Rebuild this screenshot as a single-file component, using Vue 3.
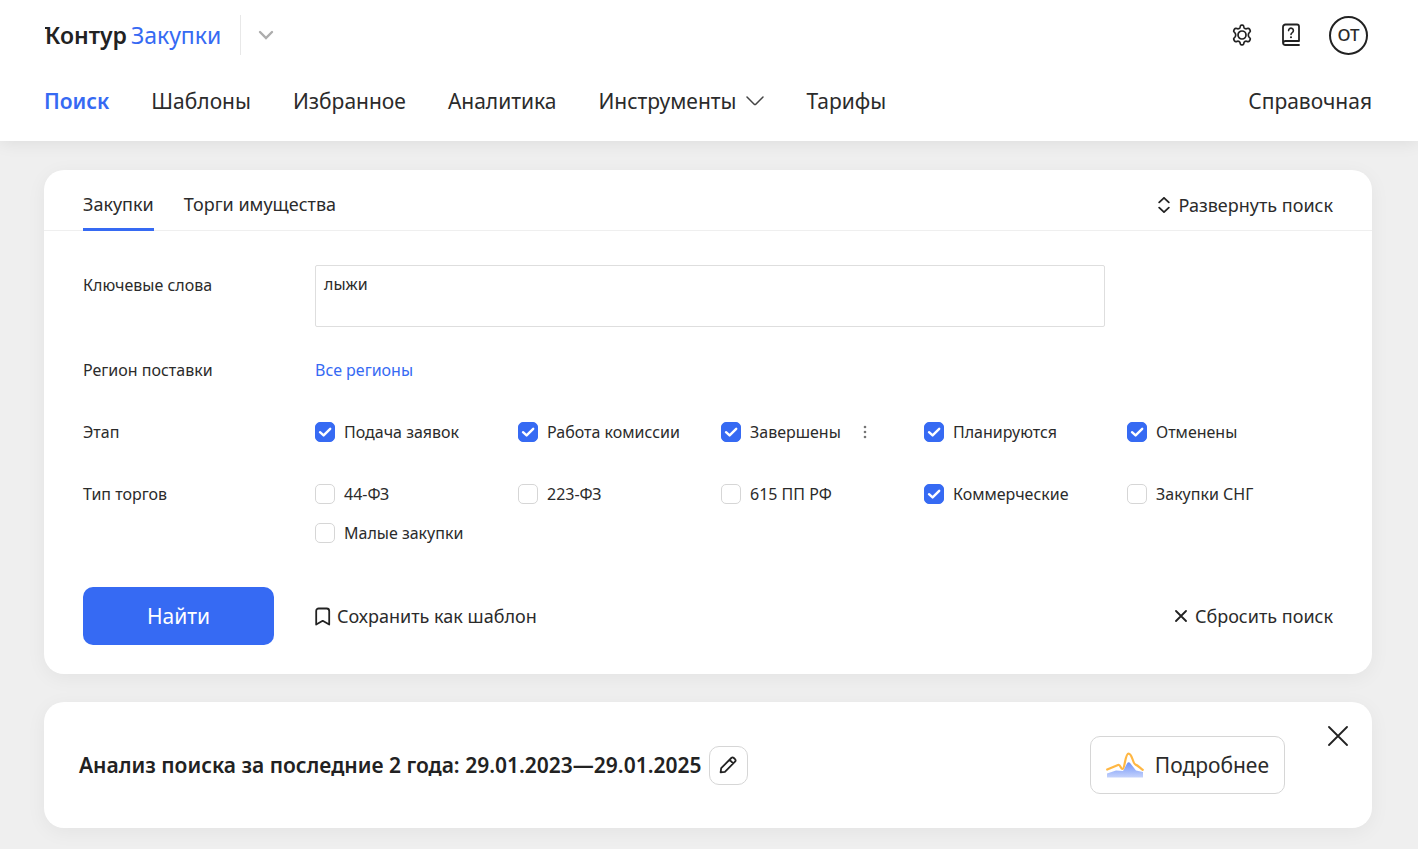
<script setup>
import { ref, reactive } from 'vue'

const keywords = ref('лыжи')
const tabs = ['Закупки', 'Торги имущества']
const activeTab = ref(0)

const groups = reactive([
  {
    id: 'stage',
    title: 'Этап',
    items: [
      { label: 'Подача заявок', on: true },
      { label: 'Работа комиссии', on: true },
      { label: 'Завершены', on: true, menu: true },
      { label: 'Планируются', on: true },
      { label: 'Отменены', on: true },
    ],
  },
  {
    id: 'type',
    title: 'Тип торгов',
    items: [
      { label: '44-ФЗ', on: false },
      { label: '223-ФЗ', on: false },
      { label: '615 ПП РФ', on: false },
      { label: 'Коммерческие', on: true },
      { label: 'Закупки СНГ', on: false },
      { label: 'Малые закупки', on: false },
    ],
  },
])

function reset() {
  keywords.value = ''
  groups.forEach((g) => g.items.forEach((i) => (i.on = false)))
}
</script>

<template>
  <div class="page">
    <header class="header">
      <div class="brand-row">
        <a href="#" class="logo"><span class="logo-main">Контур</span><span class="logo-product">Закупки</span></a>
        <button type="button" class="switcher" aria-label="Сервисы">
          <svg width="16" height="10" viewBox="0 0 16 10"><path d="M2 2l6 6 6-6" fill="none" stroke="#adadad" stroke-width="2.4" stroke-linecap="round" /></svg>
        </button>
        <div class="tools">
          <button type="button" class="icon-btn" aria-label="Настройки">
            <svg width="22" height="22" viewBox="0 0 22 22" fill="none" stroke="#222" stroke-width="1.7" stroke-linejoin="round">
              <path d="M9.300 2.200Q9.500 1.200 10.500 1.200h1Q12.500 1.200 12.700 2.200L13 3.400Q13.200 4.100 13.900 4.500T15.300 4.800L16.600 4.400Q17.800 4 18.400 5l.7 1.200Q19.700 7.200 18.900 8L18.200 8.700Q17.300 9.700 17.300 11T18.200 13.300L18.900 14Q19.700 14.800 19.100 15.800L18.400 17Q17.800 18 16.600 17.600L15.300 17.200Q14.600 17.100 13.900 17.500T13 18.600L12.700 19.800Q12.500 20.800 11.500 20.800h-1Q9.500 20.800 9.300 19.800L9 18.600Q8.800 17.900 8.100 17.500T6.700 17.200L5.400 17.600Q4.200 18 3.600 17L2.900 15.800Q2.300 14.800 3.100 14L3.800 13.300Q4.700 12.300 4.700 11T3.800 8.700L3.100 8Q2.300 7.200 2.900 6.200L3.600 5Q4.200 4 5.400 4.400L6.700 4.800Q7.400 4.900 8.100 4.500T9 3.400z" />
              <circle cx="11" cy="11" r="4" />
            </svg>
          </button>
          <button type="button" class="icon-btn" aria-label="Помощь">
            <svg width="20" height="24" viewBox="0 0 20 24" fill="none" stroke="#222" stroke-width="1.8" stroke-linecap="round" stroke-linejoin="round">
              <path d="M18 22H4.500A2.500 2.500 0 0 1 2 19.500V4a2.500 2.500 0 0 1 2.500-2.500H16A2 2 0 0 1 18 3.500V18H4.500a2.200 2.200 0 0 0-2.200 1.500" />
              <path d="M7.600 7.600a2.400 2.400 0 1 1 3.700 2c-.9.600-1.300 1-1.300 1.900" stroke-width="1.600" />
              <circle cx="10" cy="14.300" r=".5" stroke-width="1.100" />
            </svg>
          </button>
          <button type="button" class="avatar" aria-label="Профиль ОТ">ОТ</button>
        </div>
      </div>
      <nav class="nav">
        <a href="#" class="active">Поиск</a>
        <a href="#">Шаблоны</a>
        <a href="#">Избранное</a>
        <a href="#">Аналитика</a>
        <a href="#" class="with-arrow">Инструменты
          <svg width="18" height="10" viewBox="0 0 18 10"><path d="M1 1l7.200 7.200a1.100 1.100 0 0 0 1.600 0L17 1" fill="none" stroke="#444" stroke-width="1.500" stroke-linecap="round" /></svg>
        </a>
        <a href="#">Тарифы</a>
        <a href="#" class="nav-end">Справочная</a>
      </nav>
    </header>

    <main class="content">
      <form class="card search" @submit.prevent>
        <div class="tabs">
          <button v-for="(t, i) in tabs" :key="t" type="button" class="tab" :class="{ current: i === activeTab }" @click="activeTab = i">{{ t }}</button>
          <button type="button" class="text-btn expand">
            <svg width="12" height="16" viewBox="0 0 12 16" fill="none" stroke="#222" stroke-width="1.800" stroke-linecap="round"><path d="M1.200 5.300L6 .9l4.800 4.400M1.200 10.700L6 15.100l4.800-4.400" /></svg>
            Развернуть поиск
          </button>
        </div>

        <div class="fields">
          <label class="caption keywords-caption" for="keywords">Ключевые слова</label>
          <textarea id="keywords" v-model="keywords" class="keywords"></textarea>

          <span class="caption">Регион поставки</span>
          <a href="#" class="link">Все регионы</a>

          <template v-for="g in groups" :key="g.id">
            <span :id="g.id" class="caption">{{ g.title }}</span>
            <div class="options" role="group" :aria-labelledby="g.id">
              <div v-for="item in g.items" :key="item.label" class="option">
                <label class="check">
                  <span class="box">
                    <input v-model="item.on" type="checkbox" />
                    <svg v-if="item.on" width="20" height="20" viewBox="0 0 20 20"><path d="M5 10.200l3.600 3.200 6.600-6.600" fill="none" stroke="#fff" stroke-width="2.400" stroke-linecap="round" stroke-linejoin="round" /></svg>
                  </span>
                  {{ item.label }}
                </label>
                <button v-if="item.menu" type="button" class="more" aria-label="Ещё">
                  <svg width="4" height="14" viewBox="0 0 4 14" fill="#757575"><circle cx="2" cy="2" r="1.300" /><circle cx="2" cy="7" r="1.300" /><circle cx="2" cy="12" r="1.300" /></svg>
                </button>
              </div>
            </div>
          </template>
        </div>

        <div class="actions">
          <button type="submit" class="submit">Найти</button>
          <button type="button" class="text-btn save">
            <svg width="16" height="19" viewBox="0 0 16 19" fill="none" stroke="#222" stroke-width="1.800" stroke-linejoin="round"><path d="M1.200 17.500V4A2.500 2.500 0 0 1 3.700 1.500h8A2.500 2.500 0 0 1 14.200 4v13.500L7.700 13.800z" /></svg>
            Сохранить как шаблон
          </button>
          <button type="button" class="text-btn reset" @click="reset">
            <svg width="12" height="12" viewBox="0 0 12 12"><path d="M1 1l10 10M11 1L1 11" fill="none" stroke="#222" stroke-width="1.800" stroke-linecap="round" /></svg>
            Сбросить поиск
          </button>
        </div>
      </form>

      <section class="card analysis">
        <h2>Анализ поиска за последние 2 года: 29.01.2023—29.01.2025</h2>
        <button type="button" class="edit" aria-label="Изменить">
          <svg width="18" height="18" viewBox="0 0 18 18" fill="none" stroke="#222" stroke-width="1.800" stroke-linejoin="round"><path d="M1.600 16.400l.6-4.300L12.300 2a1.800 1.800 0 0 1 2.500 0l1.200 1.200a1.800 1.800 0 0 1 0 2.500L5.900 15.800zM10.600 3.800l3.600 3.600" /></svg>
        </button>
        <button type="button" class="details">
          <svg width="38" height="26" viewBox="0 0 38 26">
            <defs><linearGradient id="hill" x1="0" y1="0" x2="0" y2="1"><stop offset="0" stop-color="#6f92f8" /><stop offset="1" stop-color="#c5d3fc" /></linearGradient></defs>
            <path d="M1 21.500l9-3 7 .5 4-7.500q1.500-2.500 3.500 0l5.500 7L37 20v5.500H1z" fill="url(#hill)" />
            <path d="M1.200 17.500L12 13c2.500-1 2.500 4 4.500 4 2.500 0 2.500-15.400 6-15.400 4 0 4 9.900 7 11 2 .6 4 2.700 7.300 5.300" fill="none" stroke="#ffb743" stroke-width="2.200" stroke-linecap="round" />
          </svg>
          Подробнее
        </button>
        <button type="button" class="close" aria-label="Закрыть">
          <svg width="20" height="20" viewBox="0 0 20 20"><path d="M1 1l18 18M19 1L1 19" fill="none" stroke="#222" stroke-width="1.800" stroke-linecap="round" /></svg>
        </button>
      </section>
    </main>
  </div>
</template>

<style>
html,
body {
  margin: 0;
  background: #efefef;
}
</style>

<style scoped>
.page {
  min-height: 100vh;
  background: #efefef;
  color: #2b2b2b;
  font-family: 'Noto Sans', 'Open Sans', sans-serif;
  font-size: 16px;
  line-height: 24px;
}
button {
  margin: 0;
  padding: 0;
  border: 0;
  background: none;
  color: inherit;
  font: inherit;
  cursor: pointer;
}
a {
  color: inherit;
  text-decoration: none;
}
svg {
  display: block;
  flex: none;
}
.header {
  position: relative;
  padding: 0 46px 0 44px;
  background: #fff;
  box-shadow: 0 2px 16px rgba(0, 0, 0, 0.08);
}
.brand-row {
  display: flex;
  align-items: center;
  height: 70px;
}
.logo {
  display: flex;
  gap: 4px;
  padding: 0 19px 0 1px;
  font-size: 23px;
  line-height: 40px;
}
.logo-main {
  position: relative;
  color: #222;
  font-weight: 600;
}
.logo-main::before {
  content: '';
  position: absolute;
  top: 12px;
  left: 0;
  width: 4px;
  height: 2px;
  background: #222;
}
.logo-product,
.nav .active {
  color: #366af3;
}
.switcher {
  display: flex;
  align-items: center;
  height: 40px;
  padding: 0 17px;
  border-left: 1px solid #e8e8e8;
}
.tools {
  display: flex;
  align-items: center;
  gap: 28px;
  margin-left: auto;
  padding-right: 4px;
}
.avatar {
  width: 39px;
  height: 39px;
  border: 2px solid #222;
  border-radius: 50%;
  font-size: 17px;
  font-weight: 500;
}
.nav {
  display: flex;
  gap: 42px;
  padding: 15px 0 24px;
  font-size: 21px;
  line-height: 32px;
}
.nav .active {
  font-weight: 600;
}
.with-arrow {
  display: flex;
  align-items: center;
  gap: 10px;
}
.nav-end {
  margin-left: auto;
}
.content {
  display: grid;
  gap: 28px;
  padding: 29px 46px 21px 44px;
}
.card {
  border-radius: 20px;
  background: #fff;
  box-shadow: 0 4px 20px rgba(0, 0, 0, 0.05);
}
.tabs {
  display: flex;
  gap: 30px;
  height: 60px;
  padding: 0 39px;
  border-bottom: 1px solid #efefef;
  font-size: 18px;
}
.tab {
  height: 61px;
  padding-top: 10px;
  border-bottom: 3px solid transparent;
}
.tab.current {
  border-color: #366af3;
}
.text-btn {
  display: flex;
  align-items: center;
  gap: 8px;
  font-size: 18px;
}
.expand,
.reset {
  margin-left: auto;
}
.expand {
  padding-top: 10px;
}
.fields {
  display: grid;
  grid-template-columns: 232px 1fr;
  row-gap: 38px;
  padding: 34px 39px 42px;
}
.keywords-caption {
  padding-top: 8px;
}
.keywords {
  box-sizing: border-box;
  width: 100%;
  max-width: 790px;
  height: 62px;
  margin-bottom: -7px;
  padding: 6px 8px;
  border: 1px solid #dedede;
  border-radius: 2px;
  color: inherit;
  font: inherit;
  resize: none;
  outline: 0;
}
.link {
  color: #366af3;
}
.options {
  display: grid;
  grid-template-columns: repeat(5, 203px);
  row-gap: 15px;
}
.option,
.check {
  display: flex;
  align-items: center;
}
.check {
  gap: 9px;
  white-space: nowrap;
}
.box {
  display: grid;
  width: 20px;
  height: 20px;
}
.box > * {
  grid-area: 1 / 1;
}
.box svg {
  position: relative;
  pointer-events: none;
}
.box input {
  appearance: none;
  box-sizing: border-box;
  width: 20px;
  height: 20px;
  margin: 0;
  border: 1px solid #d6d6d6;
  border-radius: 5px;
}
.box input:checked {
  border-color: #366af3;
  background: #366af3;
}
.more {
  margin-left: 22px;
}
.actions {
  display: flex;
  align-items: center;
  padding: 0 39px 29px;
}
.submit {
  width: 191px;
  height: 58px;
  border-radius: 10px;
  background: #366af3;
  color: #fff;
  font-size: 21px;
}
.save {
  gap: 6px;
  margin-left: 41px;
}
.analysis {
  display: flex;
  align-items: center;
  gap: 7px;
  padding: 34px 24px 34px 35px;
}
h2 {
  margin: 0;
  color: #222;
  font-size: 21px;
  font-weight: 600;
  line-height: 32px;
}
.edit,
.details {
  display: flex;
  align-items: center;
  justify-content: center;
  border: 1px solid #d6d6d6;
  border-radius: 10px;
}
.edit {
  width: 39px;
  height: 39px;
}
.details {
  gap: 11px;
  height: 58px;
  margin-left: auto;
  padding: 0 15px;
  font-size: 21px;
}
.close {
  align-self: flex-start;
  margin: -10px 0 0 36px;
}
</style>
